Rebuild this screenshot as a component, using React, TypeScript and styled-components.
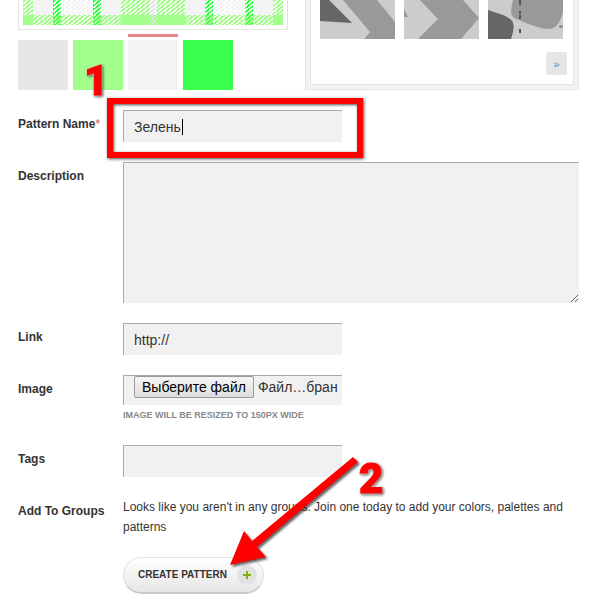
import React from "react";
import styled, { createGlobalStyle, css } from "styled-components";

const GlobalStyle = createGlobalStyle`
  * { box-sizing: border-box; }
  body {
    margin: 0;
    background: #fff;
    color: #333;
    font: 12px/20px "Liberation Sans", Arial, sans-serif;
    overflow-x: hidden;
  }
`;

const RED = "#fe0000";

const Page = styled.main`
  padding: 0 18px 19px;
`;

const Top = styled.section`
  display: grid;
  grid-template-columns: 270px 1fr;
  gap: 17px;
  margin-bottom: 20px;
`;

const Preview = styled.div`
  border: 1px solid #e4e4e4;
  border-top: 0;
  padding: 0 4px 4px;

  svg { display: block; width: 100%; height: 25px; }
`;

const Swatches = styled.div`
  display: flex;
  gap: 5px;
  margin-top: 10px;
`;

const Swatch = styled.button<{ $color: string; $selected?: boolean }>`
  position: relative;
  width: 50px;
  height: 50px;
  padding: 0;
  border: 0;
  background: ${(p) => p.$color};
  ${(p) =>
    p.$selected &&
    css`
      &::before {
        content: "";
        position: absolute;
        inset: -6px 0 auto;
        height: 3px;
        background: #e88b88;
      }
    `}
`;

const StepNumber = styled.span<{ $left: number; $top: number }>`
  position: absolute;
  left: ${(p) => p.$left}px;
  top: ${(p) => p.$top}px;
  z-index: 3;
  color: ${RED};
  font: 900 42px/42px Impact, Roboto, sans-serif;
  -webkit-text-stroke: 1px ${RED};
  filter: drop-shadow(0 0 1px #fff) drop-shadow(1px 1px 1px rgba(0, 0, 0, 0.7));
  pointer-events: none;
`;

const Gallery = styled.div`
  border: 1px solid #e4e4e4;
  border-top: 0;
  padding: 0 4px 4px;
  background: #f3f3f3;
`;

const GalleryInner = styled.div`
  display: flex;
  flex-direction: column;
  gap: 13px;
  height: 100%;
  border: 1px solid #e4e4e4;
  border-top: 0;
  padding: 0 6px 9px 9px;
  background: #fff;
`;

const Thumbs = styled.div`
  display: flex;
  gap: 9px;

  svg { display: block; width: 75px; height: 39px; background: #ccc; }
`;

const NextLink = styled.a`
  align-self: flex-end;
  width: 21px;
  height: 23px;
  border-radius: 2px;
  background: #e6e6e6;
  color: #5f8ca8;
  font-size: 11px;
  line-height: 25px;
  text-align: center;
  text-decoration: none;
`;

const Form = styled.form`
  display: flex;
  flex-direction: column;
  gap: 20px;
`;

const Row = styled.div`
  display: grid;
  grid-template-columns: 105px minmax(0, 1fr);
`;

const Label = styled.label`
  padding-top: 4px;
  font-weight: bold;
`;

const Required = styled.span`
  color: #e0483e;
  font-weight: normal;
`;

const Field = styled.div`
  position: relative;
`;

const NarrowField = styled(Field)`
  width: 219px;
`;

const control = css`
  display: block;
  width: 100%;
  border: solid #aaa;
  border-width: 1px 0 0 1px;
  border-radius: 0;
  background: #f1f1f1;
  color: #333;
  font: 14px/20px "Liberation Sans", Arial, sans-serif;
  outline: 0;
`;

const TextInput = styled.input`
  ${control}
  height: 32px;
  padding: 0 10px;
`;

const TextArea = styled.textarea`
  ${control}
  height: 141px;
  padding: 5px 10px;
`;

const Caret = styled.span`
  position: absolute;
  left: 59px;
  top: 9px;
  width: 1px;
  height: 16px;
  background: #000;
`;

const Highlight = styled.div`
  position: absolute;
  inset: -12px -21px -16px -16px;
  border: 6px solid ${RED};
  box-shadow: 1px 1px 3px rgba(0, 0, 0, 0.7), inset 1px 1px 3px rgba(0, 0, 0, 0.7);
  pointer-events: none;
`;

const FilePicker = styled.label`
  ${control}
  display: flex;
  align-items: flex-start;
  gap: 4px;
  height: 30px;
  padding-left: 10px;
  white-space: nowrap;

  input {
    position: absolute;
    width: 1px;
    height: 1px;
    opacity: 0;
  }
`;

const FileButton = styled.span`
  height: 22px;
  padding: 0 7px;
  border: 1px solid #999;
  border-radius: 2px;
  background: linear-gradient(#f6f6f6, #dedede);
  color: #000;
  font-size: 14px;
`;

const FileName = styled.span`
  font-size: 14px;
  line-height: 22px;
`;

const Hint = styled.small`
  display: block;
  color: #888;
  font-size: 9px;
  font-weight: bold;
  line-height: 20px;
  text-transform: uppercase;
`;

const Message = styled.p`
  margin: 0;
`;

const Submit = styled.button`
  display: flex;
  align-items: center;
  justify-content: space-between;
  width: 141px;
  height: 37px;
  margin-top: 20px;
  padding: 0 6px 0 14px;
  border: 1px solid #e2e2e2;
  border-bottom: 2px solid #cacaca;
  border-radius: 19px;
  background: linear-gradient(#fff, #e6e6e6);
  color: #333;
  font: bold 10px/20px "Liberation Sans", Arial, sans-serif;

  svg { width: 20px; height: 20px; }
`;

const Arrow = styled.svg`
  position: absolute;
  left: 103px;
  top: -43px;
  width: 140px;
  height: 118px;
  z-index: 2;
  overflow: visible;
  filter: drop-shadow(2px 2px 1px rgba(0, 0, 0, 0.6));
  pointer-events: none;
`;

const LIGHT = "#a2ff8c";
const BRIGHT = "#38ff4c";
const PALE = "#f3f3f3";
const GREY = "#e6e6e6";
const WHITE = "#ffffff";

const threads: [string, number][] = [
  [LIGHT, 10], [PALE, 20], [BRIGHT, 8], [WHITE, 32], [BRIGHT, 8],
  [PALE, 20], [LIGHT, 28], [GREY, 8], [LIGHT, 28], [PALE, 20],
  [BRIGHT, 8], [WHITE, 32], [BRIGHT, 8], [PALE, 20], [LIGHT, 10],
];

function Plaid() {
  let x = 0;
  const columns = threads.map(([color, width]) => {
    const column = { color, width, x };
    x += width;
    return column;
  });
  return (
    <svg viewBox="0 0 260 25" preserveAspectRatio="xMinYMin slice" shapeRendering="crispEdges" aria-label="Pattern preview">
      <defs>
        <pattern id="weft-white" width="5" height="4" patternUnits="userSpaceOnUse">
          <path fill={WHITE} d="M3 0h2v1h-2zM2 1h2v1h-2zM1 2h2v1h-2zM0 3h2v1h-2z" />
        </pattern>
        <pattern id="weft-light" width="5" height="4" patternUnits="userSpaceOnUse">
          <path fill={LIGHT} d="M3 0h2v1h-2zM0 0h1v1h-1zM2 1h3v1h-3zM1 2h3v1h-3zM0 3h3v1h-3z" />
        </pattern>
      </defs>
      {columns.map((c) => (
        <g key={c.x}>
          <rect x={c.x} width={c.width} height="15" fill={c.color === WHITE ? PALE : c.color} />
          {c.color !== PALE && <rect x={c.x} width={c.width} height="15" fill="url(#weft-white)" />}
          <rect x={c.x} y="15" width={c.width} height="10" fill={c.color} />
        </g>
      ))}
      <rect y="15" width="260" height="10" fill="url(#weft-light)" />
    </svg>
  );
}

export default function App() {
  return (
    <>
      <GlobalStyle />
      <Page>
        <Top>
          <div>
            <Preview><Plaid /></Preview>
            <Swatches>
              <Swatch type="button" $color="#e7e7e7" aria-label="Grey" />
              <Swatch type="button" $color={LIGHT} aria-label="Light green">
                <StepNumber $left={11} $top={20}>1</StepNumber>
              </Swatch>
              <Swatch type="button" $color={PALE} $selected aria-label="Pale grey" />
              <Swatch type="button" $color={BRIGHT} aria-label="Green" />
            </Swatches>
          </div>
          <Gallery>
            <GalleryInner>
              <Thumbs>
                <svg viewBox="0 0 75 39">
                  <path fill="#666" d="M0 0H9L32 23 0 21Z" />
                  <path fill="#999" d="M23 0 50 32 44 39H75V22L57 0Z" />
                </svg>
                <svg viewBox="0 0 75 39">
                  <path fill="#999" d="M16 0 34 19 14 39H57L75 18 59 0ZM0 9 4 17H0Z" />
                </svg>
                <svg viewBox="0 0 75 39">
                  <path fill="#999" d="M25 0C22 13 22 17 31 20 39 24 49 27 57 29 68 30 71 25 75 12V0Z" />
                  <path fill="#666" d="M0 10 15 15C24 19 27 22 25 32L23 39H0Z" />
                  <path stroke="#555" strokeWidth="2" d="M32 0v5M32 11v3M32 15v4M32 29v4" />
                  <path stroke="#777" strokeWidth="2" strokeLinecap="round" d="M72 26.500h2" />
                </svg>
              </Thumbs>
              <NextLink href="#next">»</NextLink>
            </GalleryInner>
          </Gallery>
        </Top>

        <Form onSubmit={(e) => e.preventDefault()}>
          <Row>
            <Label htmlFor="name">Pattern Name<Required>*</Required></Label>
            <NarrowField>
              <TextInput id="name" defaultValue="Зелень" />
              <Caret />
              <Highlight />
            </NarrowField>
          </Row>
          <Row>
            <Label htmlFor="description">Description</Label>
            <Field><TextArea id="description" /></Field>
          </Row>
          <Row>
            <Label htmlFor="link">Link</Label>
            <NarrowField><TextInput id="link" defaultValue="http://" /></NarrowField>
          </Row>
          <Row>
            <Label htmlFor="image">Image</Label>
            <NarrowField>
              <FilePicker>
                <input id="image" type="file" />
                <FileButton>Выберите файл</FileButton>
                <FileName>Файл…бран</FileName>
              </FilePicker>
              <Hint>Image will be resized to 150px wide</Hint>
            </NarrowField>
          </Row>
          <Row>
            <Label htmlFor="tags">Tags</Label>
            <NarrowField><TextInput id="tags" /></NarrowField>
          </Row>
          <Row>
            <Label as="span">Add To Groups</Label>
            <Field>
              <Message>
                Looks like you aren't in any groups. Join one today to add your colors, palettes and patterns
              </Message>
              <Submit type="submit">
                CREATE PATTERN
                <svg viewBox="0 0 20 20" aria-hidden="true">
                  <circle cx="10" cy="10" r="10" fill="#e2e2e2" />
                  <path stroke="#84b000" strokeWidth="2" d="M6 10h8M10 6v8" />
                </svg>
              </Submit>
              <Arrow viewBox="0 0 140 118" aria-hidden="true">
                <path fill={RED} d="M4 111 18 77 26 87 127 3 132 8 31 93 40 103Z" />
              </Arrow>
              <StepNumber $left={236} $top={-39}>2</StepNumber>
            </Field>
          </Row>
        </Form>
      </Page>
    </>
  );
}
